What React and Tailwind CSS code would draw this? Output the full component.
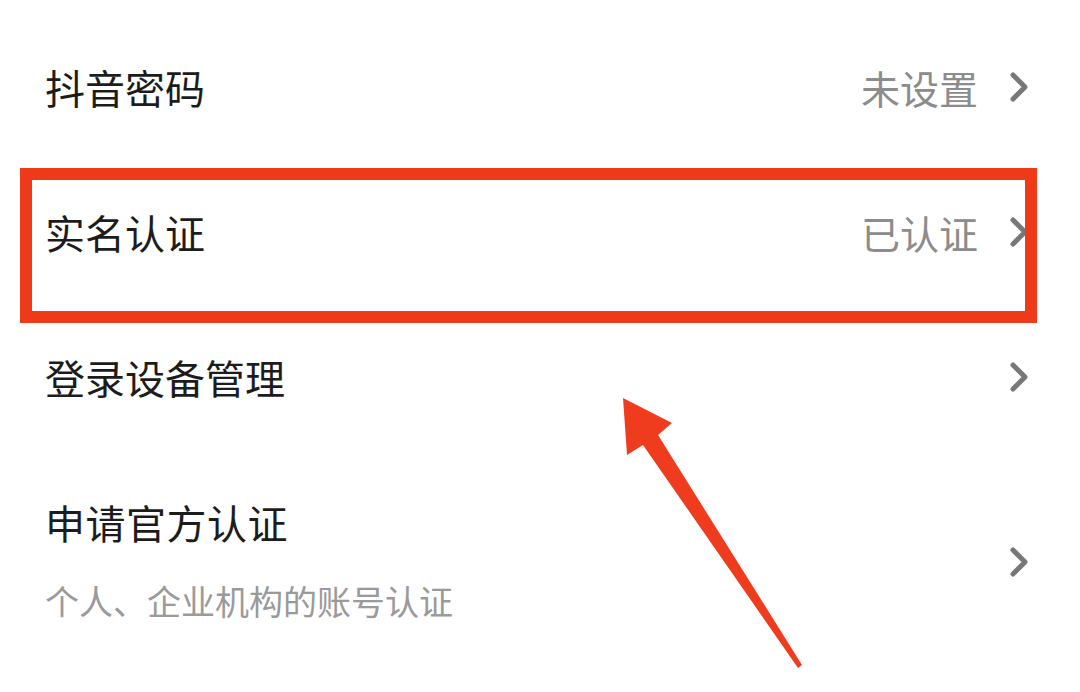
import React from "react";

const font = { fontFamily: '"Noto Sans CJK SC", "Noto Sans", sans-serif' };

const Chevron = () => (
  <svg width="20" height="32" viewBox="0 0 20 32" className="shrink-0">
    <polyline
      points="4,4 16,16 4,28"
      fill="none"
      stroke="#777777"
      strokeWidth="5"
      strokeLinecap="round"
      strokeLinejoin="round"
    />
  </svg>
);

const Row = ({ title, value }) => (
  <div className="h-[145px] flex items-center pl-[45px] pr-[51px]">
    <span className="flex-1 text-[40px] leading-[48px] text-[#1c1c1c]">{title}</span>
    {value && (
      <span className="text-[39px] leading-[48px] text-[#8c8c8c] mr-[31px]">{value}</span>
    )}
    {!value && <span className="mr-[31px]" />}
    <Chevron />
  </div>
);

export default function App() {
  return (
    <div className="relative w-[1080px] h-[692px] bg-white overflow-hidden" style={font}>
      <div className="flex flex-col pt-[14px]">
        <Row title="抖音密码" value="未设置" />
        <Row title="实名认证" value="已认证" />
        <Row title="登录设备管理" />
        <div className="flex items-center pl-[45px] pr-[51px] py-[49px]">
          <div className="flex-1 flex flex-col gap-[31px]">
            <span className="text-[40px] leading-[48px] text-[#1c1c1c] tracking-[0.5px]">申请官方认证</span>
            <span className="text-[34px] leading-[48px] text-[#9a9a9a]">
              个人、企业机构的账号认证
            </span>
          </div>
          <span className="mr-[31px]" />
          <Chevron />
        </div>
      </div>

      {/* annotation box */}
      <div className="absolute left-[20px] top-[168px] w-[1017px] h-[155px] border-[12px] border-[#ef3a1a]" />

      {/* annotation arrow */}
      <svg className="absolute left-0 top-0" width="1080" height="692" viewBox="0 0 1080 692">
        <polygon
          points="623,398 672,423 658,435 802,665 798,668 643,445 627,455"
          fill="#f03c1e"
        />
      </svg>
    </div>
  );
}
